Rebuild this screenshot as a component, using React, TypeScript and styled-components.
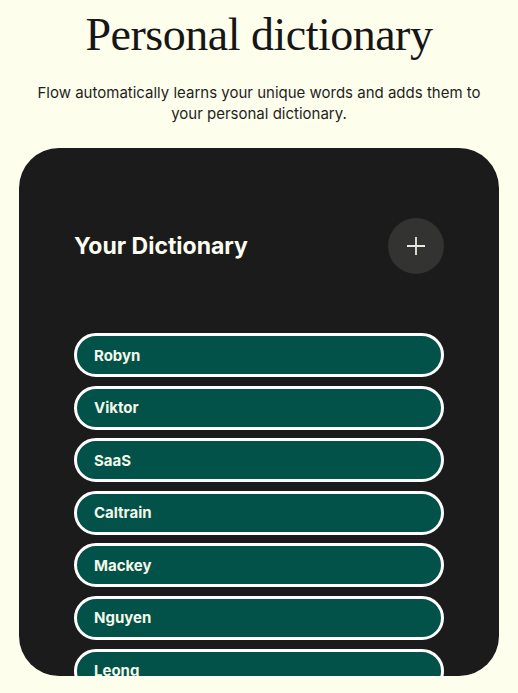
import styled, { createGlobalStyle } from 'styled-components';

const GlobalStyle = createGlobalStyle`
  html, body {
    margin: 0;
    padding: 0;
    background: #fefeec;
  }
  * {
    box-sizing: border-box;
  }
`;

const words = ['Robyn', 'Viktor', 'SaaS', 'Caltrain', 'Mackey', 'Nguyen', 'Leong'];

const App = () => {
  return (
    <>
      <GlobalStyle />
      <Page>
        <Title>Personal dictionary</Title>
        <Subtitle>
          Flow automatically learns your unique words and adds them to
          <br />
          your personal dictionary.
        </Subtitle>
        <Card>
          <CardHeader>
            <CardTitle>Your Dictionary</CardTitle>
            <AddButton aria-label="Add word">
              <svg width="20" height="20" viewBox="0 0 20 20" fill="none">
                <path d="M10 1v18M1 10h18" stroke="#e8e8e0" strokeWidth="1.8" />
              </svg>
            </AddButton>
          </CardHeader>
          <WordList>
            {words.map((w) => (
              <WordPill key={w}>{w}</WordPill>
            ))}
          </WordList>
        </Card>
      </Page>
    </>
  );
};

const Page = styled.main`
  display: flex;
  flex-direction: column;
  align-items: center;
  height: 693px;
  overflow: hidden;
  padding-top: 7px;
  color: #1b1b1b;
`;

const Title = styled.h1`
  margin: 0;
  font-family: 'Liberation Serif', 'Times New Roman', serif;
  font-weight: 400;
  font-size: 46px;
  line-height: 56px;
  letter-spacing: -0.5px;
  color: #161616;
`;

const Subtitle = styled.p`
  margin: 19px 0 0;
  font-family: 'Inter', 'Noto Sans', sans-serif;
  font-size: 15px;
  line-height: 21px;
  text-align: center;
  color: #1f1f1f;
`;

const Card = styled.section`
  margin-top: 24px;
  width: 480px;
  height: 528px;
  flex-shrink: 0;
  background: #1b1b1b;
  border-radius: 40px;
  overflow: hidden;
  padding: 70px 55px 0;
`;

const CardHeader = styled.div`
  display: flex;
  align-items: center;
  justify-content: space-between;
  height: 56px;
`;

const CardTitle = styled.h2`
  margin: 0;
  font-family: 'Inter', 'Noto Sans', sans-serif;
  font-weight: 700;
  font-size: 23px;
  letter-spacing: 0;
  color: #fdfdf0;
`;

const AddButton = styled.button`
  width: 56px;
  height: 56px;
  border: none;
  border-radius: 50%;
  background: #333332;
  display: flex;
  align-items: center;
  justify-content: center;
  padding: 0;
`;

const WordList = styled.ul`
  list-style: none;
  margin: 59px 0 0;
  padding: 0;
  display: flex;
  flex-direction: column;
  gap: 8.6px;
`;

const WordPill = styled.li`
  height: 44px;
  flex-shrink: 0;
  border: 3.5px solid #ffffff;
  border-radius: 22px;
  background: #02524a;
  display: flex;
  align-items: center;
  padding-left: 17px;
  font-family: 'Inter', 'Noto Sans', sans-serif;
  font-weight: 700;
  font-size: 15px;
  color: #f4f8e8;
`;

export default App;
